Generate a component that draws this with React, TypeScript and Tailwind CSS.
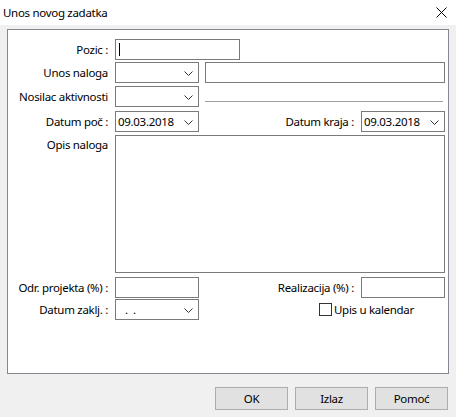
import React from 'react';

const font = { fontFamily: '"Segoe UI", "Noto Sans", "Liberation Sans", sans-serif' };

const Chevron = () => (
  <svg width="9" height="5" viewBox="0 0 9 5" className="absolute right-[5px] top-[8px]">
    <path d="M0.5 0.5 L4.5 4.5 L8.5 0.5" fill="none" stroke="#333" strokeWidth="1" />
  </svg>
);

const Combo = ({ value, className = '' }: { value?: React.ReactNode; className?: string }) => (
  <div className={`relative h-[21px] w-[84px] shrink-0 border border-[#7a7a7a] bg-white ${className}`}>
    {value && <span className="absolute left-[2px] top-[1px] leading-[17px]">{value}</span>}
    <Chevron />
  </div>
);

const Input = ({ className = '', children }: { className?: string; children?: React.ReactNode }) => (
  <div className={`relative h-[21px] shrink-0 border border-[#7a7a7a] bg-white ${className}`}>{children}</div>
);

const Label = ({ children, className = '' }: { children: React.ReactNode; className?: string }) => (
  <div className={`w-[101px] shrink-0 pr-[1px] text-right ${className}`}>{children}</div>
);

const Button = ({ children }: { children: React.ReactNode }) => (
  <div className="flex h-[23px] w-[73px] items-center justify-center border border-[#adadad] bg-[#e1e1e1]">
    {children}
  </div>
);

export default function App() {
  return (
    <div className="h-[417px] w-[456px] bg-[#f0f0f0] text-[11.5px] tracking-[-0.3px] text-black" style={font}>
      <div className="flex h-[25px] items-center justify-between bg-white pl-[3px] pr-[9px]">
        <span>Unos novog zadatka</span>
        <svg width="11" height="11" viewBox="0 0 11 11">
          <path d="M0.5 0.5 L10.5 10.5 M10.5 0.5 L0.5 10.5" stroke="#000" strokeWidth="1" />
        </svg>
      </div>
      <div className="mx-[7px] mt-[4px] h-[345px] border border-[#828790] bg-white pt-[9px]">
        <div className="flex items-center gap-[6px]">
          <Label>Pozic :</Label>
          <Input className="w-[125px]">
            <div className="absolute left-[3px] top-[3px] h-[13px] w-[1px] bg-black" />
          </Input>
        </div>
        <div className="mt-[2px] flex items-center gap-[6px]">
          <Label>Unos naloga</Label>
          <Combo />
          <Input className="w-[240px]" />
        </div>
        <div className="mt-[3px] flex items-center gap-[6px]">
          <Label>Nosilac aktivnosti</Label>
          <Combo />
          <div className="mt-[9px] h-[1px] w-[238px] bg-[#a0a0a0]" />
        </div>
        <div className="mt-[4px] flex items-center gap-[6px]">
          <Label>Datum poč :</Label>
          <Combo value="09.03.2018" />
          <div className="w-[150px] shrink-0 pr-[1px] text-right">Datum kraja :</div>
          <Combo value="09.03.2018" />
        </div>
        <div className="mt-[3px] flex gap-[6px]">
          <Label className="pt-[1px]">Opis naloga</Label>
          <div className="h-[138px] w-[330px] border border-[#7a7a7a] bg-white" />
        </div>
        <div className="mt-[4px] flex items-center gap-[6px]">
          <Label>Odr. projekta (%) :</Label>
          <Input className="w-[84px]" />
          <div className="w-[150px] shrink-0 pr-[1px] text-right">Realizacija (%) :</div>
          <Input className="w-[84px]" />
        </div>
        <div className="mt-[1px] flex items-center gap-[6px]">
          <Label>Datum zaklj. :</Label>
          <Combo value={<span className="pl-[7px] tracking-[5px]">..</span>} />
          <div className="ml-[114px] flex items-center">
            <div className="h-[13px] w-[13px] border border-[#333] bg-white" />
            <span className="ml-[2px]">Upis u kalendar</span>
          </div>
        </div>
      </div>
      <div className="mt-[13px] flex justify-end gap-[7px] pr-[8px]">
        <Button>OK</Button>
        <Button>Izlaz</Button>
        <Button>Pomoć</Button>
      </div>
    </div>
  );
}
